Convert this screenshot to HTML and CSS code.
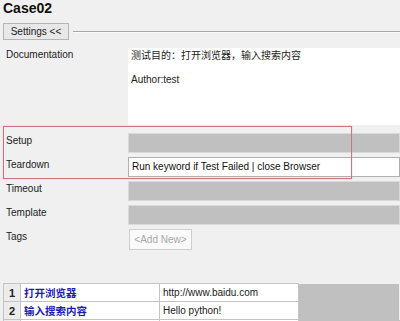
FILE: index.html
```html
<!DOCTYPE html>
<html lang="en">
<head>
  <meta charset="UTF-8">
  <title>Case02</title>
  <link rel="stylesheet" href="styles.css">
</head>
<body>
  <h1 class="title">Case02</h1>

  <div class="toggle-row">
    <button class="settings-button">Settings &lt;&lt;</button>
    <span class="toggle-line"></span>
  </div>

  <div class="settings">
    <div class="setting doc-row">
      <span class="setting-label">Documentation</span>
      <div class="doc-value">
        <p class="doc-line">测试目的：打开浏览器，输入搜索内容</p>
        <p class="doc-line">Author:test</p>
      </div>
    </div>

    <div class="setting setup-row">
      <span class="setting-label">Setup</span>
      <div class="field field-empty"></div>
    </div>

    <div class="setting">
      <span class="setting-label">Teardown</span>
      <div class="field field-filled">Run keyword if Test Failed | close Browser</div>
    </div>

    <div class="setting">
      <span class="setting-label">Timeout</span>
      <div class="field field-empty"></div>
    </div>

    <div class="setting">
      <span class="setting-label">Template</span>
      <div class="field field-empty"></div>
    </div>

    <div class="setting tags-row">
      <span class="setting-label">Tags</span>
      <div class="field">
        <span class="add-new">&lt;Add New&gt;</span>
      </div>
    </div>

    <!-- annotation box drawn over setup / teardown -->
    <div class="highlight"></div>
  </div>

  <table class="steps">
    <tr>
      <td class="step-num">1</td>
      <td class="step-keyword">打开浏览器</td>
      <td class="step-arg">http://www.baidu.com</td>
      <td class="step-rest"></td>
    </tr>
    <tr>
      <td class="step-num">2</td>
      <td class="step-keyword">输入搜索内容</td>
      <td class="step-arg">Hello python!</td>
      <td class="step-rest"></td>
    </tr>
    <tr>
      <td class="step-num"></td>
      <td class="step-keyword"></td>
      <td class="step-arg"></td>
      <td class="step-rest"></td>
    </tr>
  </table>
</body>
</html>
```

FILE: styles.css
```css
body {
  margin: 0;
  background-color: #f0f0f0;
  color: #222;
  font-family: 'Liberation Sans', Arial, 'Noto Sans CJK SC', sans-serif;
  font-size: 10px;
  overflow: hidden;
}

.title {
  margin: 0 0 0 3px;
  font-size: 14px;
  line-height: 17px;
  font-weight: bold;
  color: #111;
}

.toggle-row {
  display: flex;
  align-items: center;
  margin-top: 6px;
  padding-left: 3px;
}

.settings-button {
  height: 17px;
  width: 66px;
  padding: 0;
  background-color: #e8e8e8;
  border: 1px solid #b4b4b4;
  font-family: inherit;
  font-size: 10px;
  color: #222;
}

.toggle-line {
  flex: 1;
  margin-left: 4px;
  border-top: 1px solid #a8a8a8;
  border-bottom: 1px solid #fafafa;
}

.settings {
  position: relative;
  display: flex;
  flex-direction: column;
  gap: 4px;
  margin-top: 8px;
}

.setting {
  display: flex;
  align-items: flex-start;
}

.setting-label {
  width: 122px;
  padding-left: 6px;
  padding-top: 1px;
  line-height: 14px;
  flex-shrink: 0;
}

.doc-row .setting-label {
  padding-top: 0;
}

.doc-value {
  flex: 1;
  height: 77px;
  background-color: #fff;
  padding: 1px 3px;
  box-sizing: border-box;
}

.doc-line {
  margin: 0 0 10px;
  line-height: 14px;
}

.setup-row {
  margin-top: 4px;
}

.field {
  flex: 1;
  height: 20px;
  box-sizing: border-box;
}

.field-empty {
  background-color: #c0c0c0;
  border: 1px solid #dadada;
}

.field-filled {
  background-color: #fff;
  border: 1px solid #b0b0b0;
  padding-left: 3px;
  line-height: 18px;
  color: #111;
}

.tags-row .field {
  display: flex;
}

.add-new {
  margin-left: 1px;
  height: 21px;
  width: 63px;
  box-sizing: border-box;
  border: 1px solid #cfcfcf;
  background-color: #fafafa;
  color: #a8a8a8;
  line-height: 19px;
  text-align: center;
}

.highlight {
  position: absolute;
  left: 3px;
  top: 78px;
  width: 349px;
  height: 53px;
  box-sizing: border-box;
  border: 1px solid #d1737b;
  box-shadow: 0 0 1px #e8a6aa;
}

.steps {
  margin: 34px 0 0 3px;
  width: 397px;
  border-collapse: collapse;
  table-layout: fixed;
}

.steps td {
  height: 17px;
  padding: 0 3px;
  border: 1px solid #c4c4c4;
  line-height: 16px;
  white-space: nowrap;
  overflow: hidden;
}

.step-num {
  width: 10px;
  background-color: #ececec;
  font-weight: bold;
  font-size: 11px;
  text-align: center;
}

.step-keyword {
  width: 132px;
  background-color: #fff;
  color: #1c1cb8;
  font-weight: bold;
  font-size: 10.5px;
}

.step-arg {
  width: 132px;
  background-color: #fff;
}

.steps .step-rest {
  border: none;
  background-color: #c0c0c0;
}
```
